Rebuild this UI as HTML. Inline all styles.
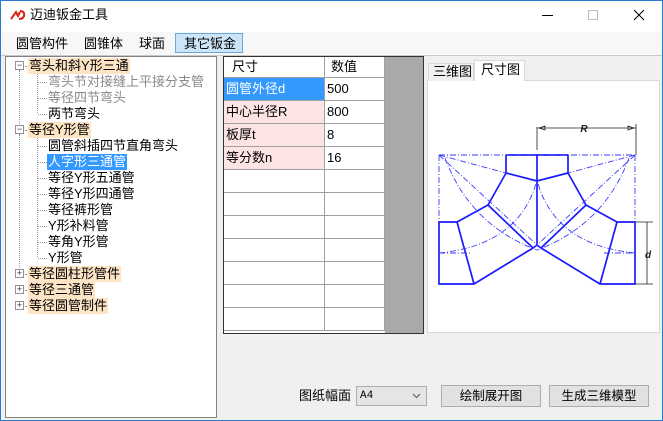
<!DOCTYPE html>
<html><head><meta charset="utf-8"><style>
*{margin:0;padding:0;box-sizing:border-box}
body{width:663px;height:421px;position:relative;overflow:hidden;background:#f0f0f0;font-family:"Liberation Sans","Noto Sans CJK SC",sans-serif;font-size:13px;color:#000}
.abs{position:absolute}
.t{position:absolute;white-space:nowrap;line-height:16px;font-size:13px}
.hl{background:#fde4c4;padding:0 1px}
.sel{background:#3399ff;color:#fff;padding:0 1px}
.gray{color:#8a8a8a}
.box{position:absolute;width:9px;height:9px;border:1px solid #919191;background:#fff;font-size:9px;line-height:7px;text-align:center;color:#333}
.dv{position:absolute;border-left:1px dotted #999;width:0}
.dh{position:absolute;border-top:1px dotted #999;height:0}
.cell{position:absolute;border-right:1px solid #a0a0a0;border-bottom:1px solid #a0a0a0;height:23px;line-height:22px;padding-left:2px;font-size:13px}
.btn{position:absolute;height:22px;background:#e1e1e1;border:1px solid #adadad;text-align:center;line-height:20px;font-size:12.5px}
</style></head><body>
<div class="abs" style="left:0;top:0;width:663px;height:421px;border:1px solid #2b79d0;border-top:none"></div>
<div class="abs" style="left:1px;top:0;width:661px;height:32px;background:#fff"></div>
<div class="abs" style="left:0;top:0;width:663px;height:1px;background:#2b79d0"></div>
<svg class="abs" style="left:10px;top:9px" width="16" height="12"><path d="M1 10 L6 3 L8 7 L10 3" stroke="#d21" stroke-width="2" fill="none"/><path d="M10 2 Q15 2 14 7 Q13 10 9 10" stroke="#d21" stroke-width="2" fill="none"/></svg>
<div class="t" style="left:30px;top:7px;font-size:13px">迈迪钣金工具</div>
<div class="abs" style="left:542px;top:15px;width:11px;height:1px;background:#000"></div>
<div class="abs" style="left:588px;top:10px;width:10px;height:10px;border:1px solid #bbb"></div>
<svg class="abs" style="left:633px;top:9px" width="12" height="12"><path d="M1 1L11 11M11 1L1 11" stroke="#000" stroke-width="1"/></svg>
<div class="abs" style="left:1px;top:32px;width:661px;height:23px;background:#f7f7f7"></div>
<div class="abs" style="left:1px;top:55px;width:661px;height:1px;background:#c8c8c8"></div>
<div class="t" style="left:16px;top:36px">圆管构件</div>
<div class="t" style="left:84px;top:36px">圆锥体</div>
<div class="t" style="left:139px;top:36px">球面</div>
<div class="abs" style="left:175px;top:33px;width:68px;height:20px;background:#cce4f7;border:1px solid #6aa8e0"></div>
<div class="t" style="left:184px;top:36px">其它钣金</div>
<div class="abs" style="left:5px;top:56px;width:212px;height:362px;background:#fff;border:1px solid #828282"></div>
<div class="dv" style="left:19px;top:70px;height:56px"></div>
<div class="dv" style="left:19px;top:134px;height:140px"></div>
<div class="dv" style="left:37px;top:73px;height:40px"></div>
<div class="dv" style="left:37px;top:137px;height:120px"></div>
<div class="box" style="left:15px;top:61px">−</div>
<div class="box" style="left:15px;top:125px">−</div>
<div class="box" style="left:15px;top:269px">+</div>
<div class="box" style="left:15px;top:285px">+</div>
<div class="box" style="left:15px;top:301px">+</div>
<div class="dh" style="left:25px;top:66px;width:4px"></div>
<div class="dh" style="left:25px;top:130px;width:4px"></div>
<div class="dh" style="left:25px;top:274px;width:4px"></div>
<div class="dh" style="left:25px;top:290px;width:4px"></div>
<div class="dh" style="left:25px;top:306px;width:4px"></div>
<div class="dh" style="left:38px;top:82px;width:9px"></div>
<div class="dh" style="left:38px;top:98px;width:9px"></div>
<div class="dh" style="left:38px;top:114px;width:9px"></div>
<div class="dh" style="left:38px;top:146px;width:9px"></div>
<div class="dh" style="left:38px;top:162px;width:9px"></div>
<div class="dh" style="left:38px;top:178px;width:9px"></div>
<div class="dh" style="left:38px;top:194px;width:9px"></div>
<div class="dh" style="left:38px;top:210px;width:9px"></div>
<div class="dh" style="left:38px;top:226px;width:9px"></div>
<div class="dh" style="left:38px;top:242px;width:9px"></div>
<div class="dh" style="left:38px;top:258px;width:9px"></div>
<div class="t hl" style="left:28px;top:58px">弯头和斜Y形三通</div>
<div class="t gray" style="left:48px;top:74px">弯头节对接缝上平接分支管</div>
<div class="t gray" style="left:48px;top:90px">等径四节弯头</div>
<div class="t" style="left:48px;top:106px">两节弯头</div>
<div class="t hl" style="left:28px;top:122px">等径Y形管</div>
<div class="t" style="left:48px;top:138px">圆管斜插四节直角弯头</div>
<div class="t sel" style="left:47px;top:154px">人字形三通管</div>
<div class="t" style="left:48px;top:170px">等径Y形五通管</div>
<div class="t" style="left:48px;top:186px">等径Y形四通管</div>
<div class="t" style="left:48px;top:202px">等径裤形管</div>
<div class="t" style="left:48px;top:218px">Y形补料管</div>
<div class="t" style="left:48px;top:234px">等角Y形管</div>
<div class="t" style="left:48px;top:250px">Y形管</div>
<div class="t hl" style="left:28px;top:266px">等径圆柱形管件</div>
<div class="t hl" style="left:28px;top:282px">等径三通管</div>
<div class="t hl" style="left:28px;top:298px">等径圆管制件</div>
<div class="abs" style="left:223px;top:56px;width:201px;height:278px;background:#a9a9a9;border:1px solid #333"></div>
<div class="abs" style="left:224px;top:57px;width:161px;height:276px;background:#fff"></div>
<div class="cell" style="left:224px;top:57px;width:101px;height:21px;line-height:20px;padding-left:8px">尺寸</div>
<div class="cell" style="left:325px;top:57px;width:60px;height:21px;line-height:20px;padding-left:6px">数值</div>
<div class="cell" style="left:224px;top:78px;width:101px;background:#3399ff;color:#fff">圆管外径d</div>
<div class="cell" style="left:325px;top:78px;width:60px">500</div>
<div class="cell" style="left:224px;top:101px;width:101px;background:#fde4e4">中心半径R</div>
<div class="cell" style="left:325px;top:101px;width:60px">800</div>
<div class="cell" style="left:224px;top:124px;width:101px;background:#fde4e4">板厚t</div>
<div class="cell" style="left:325px;top:124px;width:60px">8</div>
<div class="cell" style="left:224px;top:147px;width:101px;background:#fde4e4">等分数n</div>
<div class="cell" style="left:325px;top:147px;width:60px">16</div>
<div class="cell" style="left:224px;top:170px;width:101px"></div><div class="cell" style="left:325px;top:170px;width:60px"></div>
<div class="cell" style="left:224px;top:193px;width:101px"></div><div class="cell" style="left:325px;top:193px;width:60px"></div>
<div class="cell" style="left:224px;top:216px;width:101px"></div><div class="cell" style="left:325px;top:216px;width:60px"></div>
<div class="cell" style="left:224px;top:239px;width:101px"></div><div class="cell" style="left:325px;top:239px;width:60px"></div>
<div class="cell" style="left:224px;top:262px;width:101px"></div><div class="cell" style="left:325px;top:262px;width:60px"></div>
<div class="cell" style="left:224px;top:285px;width:101px"></div><div class="cell" style="left:325px;top:285px;width:60px"></div>
<div class="cell" style="left:224px;top:308px;width:101px"></div><div class="cell" style="left:325px;top:308px;width:60px"></div>
<div class="abs" style="left:427px;top:80px;width:233px;height:253px;background:#fff;border:1px solid #d9d9d9"></div>
<div class="abs" style="left:428px;top:63px;width:46px;height:18px;border:1px solid #d9d9d9;border-bottom:none;background:#f0f0f0"></div>
<div class="t" style="left:433px;top:64px">三维图</div>
<div class="abs" style="left:474px;top:60px;width:51px;height:21px;border:1px solid #d9d9d9;border-bottom:none;background:#fff"></div>
<div class="t" style="left:481px;top:62px">尺寸图</div>
<svg class="abs" style="left:427px;top:80px" width="233" height="253" viewBox="427 80 233 253" fill="none">
<g stroke="#1a1aff" stroke-width="1.7">
<path d="M506 155 H568 M506 155 V173 M568 155 V173 M537 155 V245"/>
<path d="M506 173 L488 205 L457 222 H439 V284 H474 L533 248 L537 245 L541 248 L600 284 H635 V222 H617 L586 205 L568 173"/>
<path d="M506 173 L537 181 L568 173 M488 205 L533 248 M586 205 L541 248 M457 222 L474 284 M617 222 L600 284"/>
</g>
<g stroke="#3a3aff" stroke-width="0.9" stroke-dasharray="6 2 1 2">
<path d="M439 155 H635 M439 155 V222 M635 155 V222 M439 253 H470 M604 253 H635"/>
<path d="M439 155 L537 245 M635 155 L537 245 M439 155 L506 173 M635 155 L568 173"/>
<path d="M439 253 Q520 245 537 180 M635 253 Q554 245 537 180"/>
<path d="M445 158 Q470 225 537 250 M629 158 Q604 225 537 250"/>
</g>
<g stroke="#222" stroke-width="0.8">
<path d="M537 127 V150 M636 124 V155 M537 128 H636 M539 128 l6 -2 v4z M634 128 l-6 -2 v4z"/>
<path d="M635 222 H653 M635 284 H653 M647 222 V284"/>
</g>
<text x="584" y="132" font-size="10" font-style="italic" font-weight="bold" fill="#222" text-anchor="middle" font-family="Liberation Sans">R</text>
<text x="645" y="258" font-size="10" font-style="italic" font-weight="bold" fill="#222" font-family="Liberation Sans">d</text>
</svg>
<div class="t" style="left:299px;top:388px">图纸幅面</div>
<div class="abs" style="left:356px;top:386px;width:71px;height:20px;border:1px solid #adadad;background:#e5e5e5"></div>
<div class="t" style="left:360px;top:388px;font-size:11px;font-family:'Liberation Mono',monospace">A4</div>
<svg class="abs" style="left:412px;top:393px" width="9" height="6"><path d="M1 1 L4.5 4.5 L8 1" stroke="#555" fill="none"/></svg>
<div class="btn" style="left:441px;top:385px;width:100px">绘制展开图</div>
<div class="btn" style="left:549px;top:385px;width:100px">生成三维模型</div>
</body></html>
